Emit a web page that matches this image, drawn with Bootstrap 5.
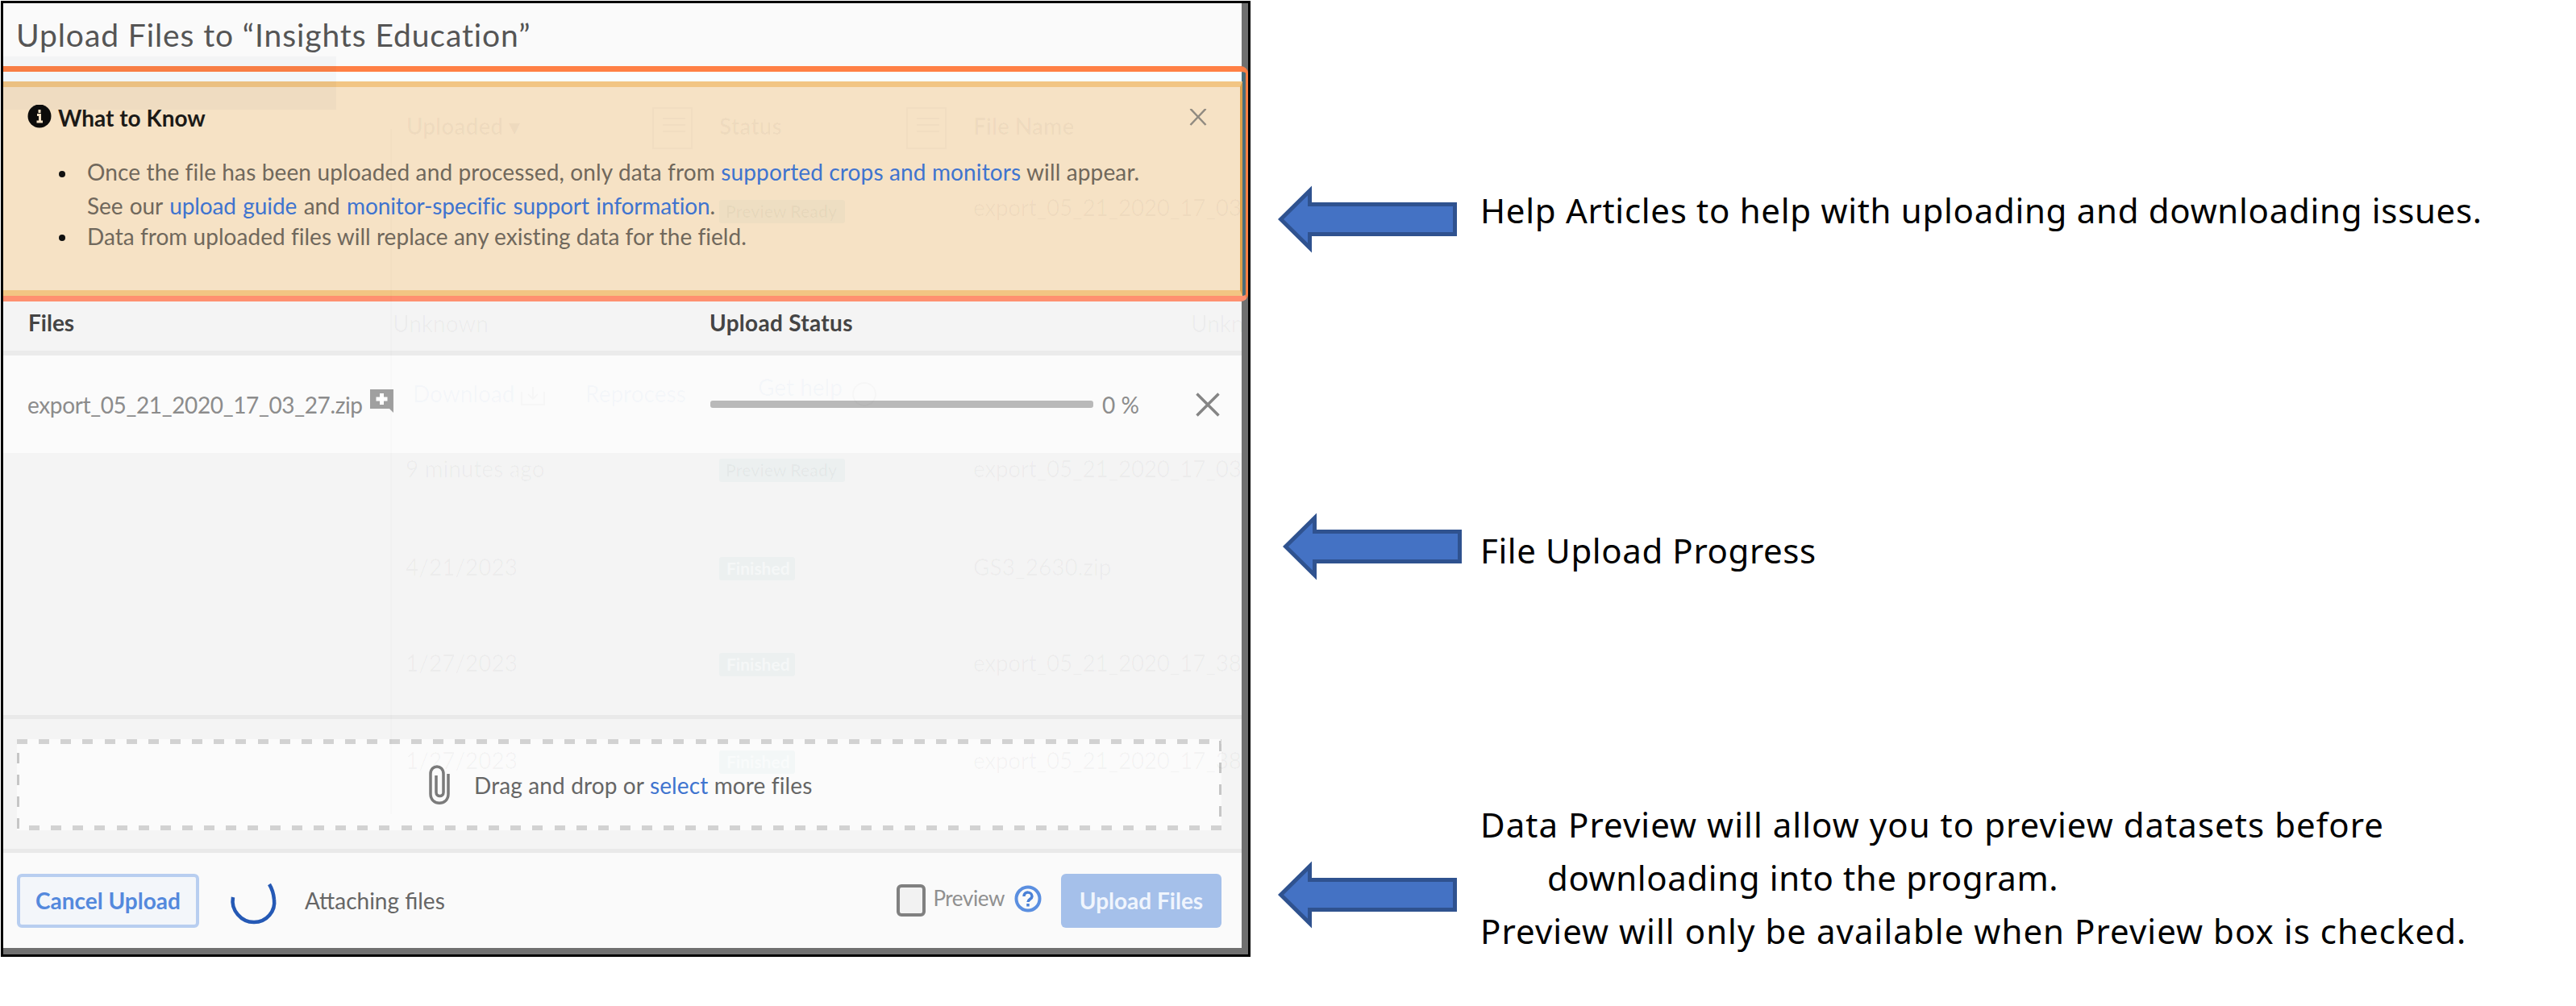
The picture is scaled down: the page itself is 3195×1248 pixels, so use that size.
<!DOCTYPE html>
<html lang="en">
<head>
    <meta charset="UTF-8">
    <meta name="viewport" content="width=device-width, initial-scale=1">
    <title>Upload Files</title>
    <link href="https://cdn.jsdelivr.net/npm/bootstrap@5.3.3/dist/css/bootstrap.min.css" rel="stylesheet">
    <style>
        body { font-family: Lato, "Open Sans", sans-serif; font-size: 28px; line-height: 40px; color: #666; background: #fff; overflow: hidden; }
        a { color: #3f74cf; text-decoration: none; }
        svg { flex: none; }

        /* upload window */
        .upload-window { width: 1550px; height: 1186px; margin: 1px 0 0 1px; border: 3px solid #000; background: #707070; padding: 0 8px 8px 0; }
        .upload-title { height: 78px; padding-left: 16px; font-size: 39px; letter-spacing: .9px; color: #555; background: #fafafa; }
        .tip-frame { height: 292px; margin-right: -8px; border: solid #ff8045; border-width: 7px 3px 7px 0; border-bottom-color: #ff9070; border-radius: 0 9px 9px 0; background: linear-gradient(90deg, #fafdff 1536px, #4c6c78 1536px); padding: 12px 4px 0 0; }
        .tip-box { height: 266px; border: solid #f2c583; border-width: 7px 3px 7px 0; border-right-color: #dda04c; background: #f6e2c5; padding: 18px 0 0 30px; color: #70685c; }
        .tip-head { height: 40px; padding-right: 41px; color: #1c1a17; }
        .tip-list { margin: 26px 0 0 39px; line-height: 42px; letter-spacing: .13px; }
        .tip-list li + li { line-height: 34px; letter-spacing: .03px; }
        .tip-second { letter-spacing: -.12px; word-spacing: 1.5px; }
        .dot { flex: none; width: 8px; height: 8px; border-radius: 50%; background: #111; margin: 20px 27px 0 0; }
        li + li .dot { margin-top: 15px; }

        .files-head { height: 67px; padding: 0 0 9px 31px; border-bottom: 6px solid #ebebeb; background: #f4f4f4; color: #444; }
        .files-row { height: 121px; padding-left: 30px; background: #fbfbfb; color: #8c8c8c; }
        .file-col { width: 845px; }
        .status-head { letter-spacing: .3px; }
        .file-name { letter-spacing: -.36px; margin-right: 9px; }
        .track { width: 475px; height: 9px; border-radius: 3px; background: #b9b9b9; margin: 0 11px 0 2px; }
        .percent { width: 116px; }
        .files-empty { height: 330px; border-bottom: 5px solid #e9e9e9; background: #f4f4f4; }

        .drop-area { height: 166px; padding: 25px 25px 0 17px; border-bottom: 5px solid #e9e9e9; background: #f4f4f4; }
        .drop-zone {
            height: 113px; padding-left: 511px; letter-spacing: .13px;
            background:
                repeating-linear-gradient(90deg, #d2d2d2 0 13px, transparent 13px 27.15px) 0 0 / 100% 6px no-repeat,
                repeating-linear-gradient(90deg, #d2d2d2 0 13px, transparent 13px 27.15px) 15px 107px / 100% 6px no-repeat,
                repeating-linear-gradient(#c6c6c6 0 13px, transparent 13px 27px) 0 17px / 3px 100% no-repeat,
                repeating-linear-gradient(#c6c6c6 0 13px, transparent 13px 27px) 100% 2px / 3px 97px no-repeat,
                #fbfbfb;
        }
        .drop-text { margin-left: 30px; }

        .actions { height: 118px; padding: 0 25px 0 17px; background: #fafafa; }
        .btn-wide { height: 67px; padding: 0; font-size: 28px; font-weight: 700; line-height: 40px; border-radius: 6px; }
        .btn-cancel { width: 226px; border: 4px solid #b8cef0; background: #f3f6fa; color: #5489dd; }
        .btn-send, .btn-send:disabled { width: 199px; border: 0; background: #a5c0ea; color: #f0f5fd; opacity: 1; }
        .spinner-arc { margin: 0 19px 0 22px; }
        .preview-check { width: 36px; height: 40px; border: 4px solid #808080; border-radius: 6px; background: #f2f2f2; }
        .preview-text { font-size: 26px; letter-spacing: -.4px; margin: 0 12px 7px 9px; color: #909090; }

        /* dimmed page showing through the window */
        .page-behind { position: absolute; left: 0; top: 0; pointer-events: none; }

        /* notes */
        .note-col { padding-left: 34px; color: #000; font-family: "Noto Sans", "Open Sans", sans-serif; font-size: 42px; line-height: 66px; white-space: nowrap; }
        .note-one { margin-top: 228px; height: 85px; letter-spacing: .7px; }
        .note-one svg { margin-top: 2px; }
        .note-two { margin-top: 323px; height: 84px; letter-spacing: .6px; }
        .note-two svg { margin-left: 6px; margin-right: -6px; }
        .note-two p { margin-top: 14px; }
        .note-three { margin-top: 270px; letter-spacing: 1.04px; }
        .note-three svg { margin-top: 78px; }
        .note-text { margin-left: 29px; }
        .indent { padding-left: 83px; letter-spacing: .6px; }
    </style>
</head>
<body>
    <svg width="0" height="0" class="position-absolute">
        <symbol id="arrow" viewBox="0 0 222 84">
            <path d="M3.5 42 39.5 6.5V23.5H219.5V60.5H39.5V77.5Z" fill="#4472c4" stroke="#2f528f" stroke-width="5"/>
        </symbol>
    </svg>

    <div class="d-flex align-items-start">
        <div class="upload-window flex-shrink-0">
            <div class="upload-title d-flex align-items-center">Upload Files to “Insights Education”</div>

            <div class="tip-frame">
                <div class="tip-box">
                    <div class="tip-head d-flex align-items-center">
                        <svg width="30" height="32" viewBox="0 0 30 32">
                            <ellipse cx="15" cy="14" rx="14.5" ry="14.5" fill="#0c0b0a"/>
                            <path d="M15 6v4M12 12.5h3.5V20M11.5 21h7.5" stroke="#f6e2c5" stroke-width="3" fill="none"/>
                        </svg>
                        <span class="fw-bold ms-2">What to Know</span>
                        <svg class="ms-auto" width="22" height="22" viewBox="0 0 22 22"><path d="M1.5 0 20.5 20M20.5 0 1.5 20" stroke="#908a80" stroke-width="2.5"/></svg>
                    </div>
                    <ul class="tip-list list-unstyled">
                        <li class="d-flex">
                            <span class="dot"></span>
                            <div>
                                <div>Once the file has been uploaded and processed, only data from <a href="#">supported crops and monitors</a> will appear.</div>
                                <div class="tip-second">See our <a href="#">upload guide</a> and <a href="#">monitor-specific support information</a>.</div>
                            </div>
                        </li>
                        <li class="d-flex"><span class="dot"></span><div>Data from uploaded files will replace any existing data for the field.</div></li>
                    </ul>
                </div>
            </div>

            <div class="files-head d-flex align-items-center fw-bold">
                <div class="file-col">Files</div>
                <div class="status-head">Upload Status</div>
            </div>
            <div class="files-row d-flex align-items-center">
                <div class="file-col d-flex align-items-center">
                    <span class="file-name">export_05_21_2020_17_03_27.zip</span>
                    <svg class="mb-2" width="29" height="29" viewBox="0 0 29 29">
                        <path d="M0 0H29V29L24 24H0Z" fill="#a0a0a0"/>
                        <path d="M14.5 5v14M7.5 12h14" stroke="#fff" stroke-width="5"/>
                    </svg>
                </div>
                <div class="track"></div>
                <div class="percent">0 %</div>
                <svg width="30" height="30" viewBox="0 0 30 30"><path d="M1.5 1.5 28.5 28.5M28.5 1.5 1.5 28.5" stroke="#858585" stroke-width="3.5"/></svg>
            </div>
            <div class="files-empty"></div>

            <div class="drop-area">
                <div class="drop-zone d-flex align-items-center">
                    <svg width="26" height="49" viewBox="0 0 26 49">
                        <path d="M24 11V36C24 51 2 51 2 36V11C2-1 18-1 18 11V34C18 40 9 40 9 34V13" fill="none" stroke="#7b7b7b" stroke-width="3.5"/>
                    </svg>
                    <span class="drop-text text-nowrap">Drag and drop or <a href="#">select</a> more files</span>
                </div>
            </div>

            <div class="actions d-flex align-items-center">
                <button type="button" class="btn btn-wide btn-cancel">Cancel Upload</button>
                <svg class="spinner-arc" width="90" height="60" viewBox="-45 -30 90 60">
                    <path d="M-25-4C-28 12-15 27 1 27C17 27 28 13 26-1Q25-12 20-20" fill="none" stroke="#2559b5" stroke-width="4.5"/>
                </svg>
                <span>Attaching files</span>
                <span class="preview-check ms-auto"></span>
                <span class="preview-text">Preview</span>
                <svg class="mb-1 me-4" width="34" height="34" viewBox="0 0 34 34">
                    <circle cx="17" cy="17" r="14.5" fill="none" stroke="#5b8fe0" stroke-width="4"/>
                    <path d="M12 14C12 7 22 8 22 14C22 17.5 17 17.5 17 21M17 23v3.5" fill="none" stroke="#4a80d6" stroke-width="3.5"/>
                </svg>
                <button type="button" class="btn btn-wide btn-send" disabled>Upload Files</button>
            </div>
        </div>

        <div class="note-col">
            <div class="note-one d-flex align-items-start">
                <svg width="222" height="84"><use href="#arrow"/></svg>
                <p class="note-text mb-0">Help Articles to help with uploading and downloading issues.</p>
            </div>
            <div class="note-two d-flex align-items-start">
                <svg width="222" height="84"><use href="#arrow"/></svg>
                <p class="note-text mb-0">File Upload Progress</p>
            </div>
            <div class="note-three d-flex align-items-start">
                <svg width="222" height="84"><use href="#arrow"/></svg>
                <div class="note-text">
                    <div>Data Preview will allow you to preview datasets before</div>
                    <div class="indent">downloading into the program.</div>
                    <div>Preview will only be available when Preview box is checked.</div>
                </div>
            </div>
        </div>
    </div>

    <svg class="page-behind" width="1560" height="1040" viewBox="0 0 1560 1040" font-size="28" fill="#000" fill-opacity=".03">
        <rect x="4" y="70" width="413" height="66" fill="#246" fill-opacity=".03"/>
        <path d="M485 160V1010" stroke="#000" stroke-opacity=".012" stroke-width="2"/>
        <g stroke="#000" stroke-opacity=".02" stroke-width="2" fill="none">
            <path d="M810 134h48v50h-48zM1125 134h48v50h-48zM822 147h28M822 155h28M822 163h28M1137 147h28M1137 155h28M1137 163h28"/>
            <path d="M647 486v16h28v-16M661 480v14M655 489l6 6 6-6"/>
            <circle cx="1072" cy="489" r="14"/>
        </g>
        <g font-weight="700">
            <text x="504" y="167">Uploaded ▾</text>
            <text x="892" y="167">Status</text>
            <text x="1207" y="167">File Name</text>
        </g>
        <text x="487" y="412">Unknown</text>
        <text x="1477" y="412">Unkn</text>
        <g fill="#36c" fill-opacity=".04">
            <text x="512" y="499">Download</text>
            <text x="726" y="499">Reprocess</text>
            <text x="940" y="491">Get help</text>
        </g>
        <g fill="#088" fill-opacity=".03">
            <rect x="892" y="248" width="156" height="29" rx="3"/>
            <rect x="892" y="569" width="156" height="29" rx="3"/>
            <rect x="892" y="691" width="94" height="29" rx="3"/>
            <rect x="892" y="810" width="94" height="29" rx="3"/>
            <rect x="892" y="931" width="94" height="29" rx="3"/>
        </g>
        <g font-size="21" font-weight="700">
            <text x="900" y="270">Preview Ready</text>
            <text x="900" y="591">Preview Ready</text>
            <g fill="#fff" fill-opacity=".5">
                <text x="901" y="713">Finished</text>
                <text x="901" y="832">Finished</text>
                <text x="901" y="953">Finished</text>
            </g>
        </g>
        <g letter-spacing="-.3">
            <text x="1207" y="268">export_05_21_2020_17_03</text>
            <text x="1207" y="592">export_05_21_2020_17_03</text>
            <text x="1207" y="833">export_05_21_2020_17_38</text>
            <text x="1207" y="954">export_05_21_2020_17_38</text>
        </g>
        <text x="503" y="592">9 minutes ago</text>
        <text x="503" y="714">4/21/2023</text>
        <text x="1207" y="714">GS3_2630.zip</text>
        <text x="503" y="833">1/27/2023</text>
        <text x="503" y="954">1/27/2023</text>
    </svg>

    <script src="https://cdn.jsdelivr.net/npm/bootstrap@5.3.3/dist/js/bootstrap.bundle.min.js"></script>
</body>
</html>
